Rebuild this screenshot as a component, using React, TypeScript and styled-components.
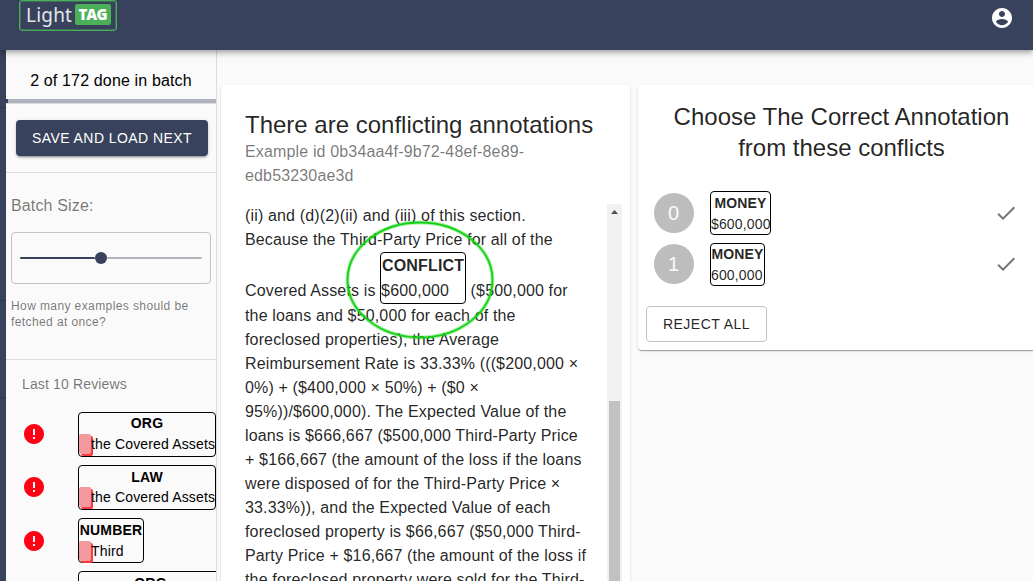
import React from 'react';
import styled, { createGlobalStyle } from 'styled-components';

const navy = '#39425c';
const ink = 'rgba(0, 0, 0, 0.87)';
const muted = 'rgba(0, 0, 0, 0.54)';
const line = '#dcdcdc';
const cardShadow =
  '0 2px 1px -1px rgba(0,0,0,.2), 0 1px 1px rgba(0,0,0,.14), 0 1px 3px rgba(0,0,0,.12)';

const GlobalStyle = createGlobalStyle`
  *, *::before, *::after { box-sizing: border-box; }
  body {
    margin: 0;
    background: #fafafa;
    color: ${ink};
    font-family: 'Liberation Sans', Arial, sans-serif;
    overflow: hidden;
  }
`;

const Page = styled.div`
  height: 581px;
  display: flex;
  flex-direction: column;
  overflow: hidden;
`;

const TopBar = styled.header`
  position: relative;
  z-index: 2;
  flex: none;
  height: 50px;
  padding: 0 19px;
  display: flex;
  justify-content: space-between;
  align-items: flex-start;
  background: ${navy};
  box-shadow: 0 2px 4px -1px rgba(0,0,0,.2), 0 4px 5px rgba(0,0,0,.14), 0 1px 10px rgba(0,0,0,.12);
`;

const Logo = styled.div`
  width: 98px;
  height: 31px;
  padding: 3px 5px 5px 6px;
  display: flex;
  justify-content: space-between;
  border: 1px solid #4bb058;
  border-radius: 3px;
  box-shadow: inset 0 0 0 1px rgba(75, 176, 88, 0.4);
  font-family: 'Noto Sans', sans-serif;
  color: #e4e6ea;
`;

const LogoWord = styled.span`
  font-size: 19px;
  line-height: 22px;
  letter-spacing: 0.2px;
`;

const LogoBadge = styled.span`
  width: 36px;
  height: 21px;
  border-radius: 2px;
  background: #4bb058;
  color: #fff;
  font-size: 15px;
  font-weight: 900;
  line-height: 21px;
  letter-spacing: -0.2px;
  text-align: center;
`;

const AccountIcon = styled.svg`
  width: 24px;
  height: 24px;
  margin-top: 6px;
  fill: #fff;
`;

const Body = styled.div`
  flex: 1;
  min-height: 0;
  display: flex;
`;

const Rail = styled.div`
  flex: none;
  width: 6px;
  padding-top: 57px;
  display: flex;
  flex-direction: column;
  background: ${navy};
`;

const RailRule = styled.div<{ $gap: number }>`
  flex: none;
  height: 1px;
  margin-bottom: ${(p) => p.$gap}px;
  background: #2f374e;
`;

const Sidebar = styled.aside`
  flex: none;
  width: 211px;
  border-right: 1px solid ${line};
  display: flex;
  flex-direction: column;
  overflow: hidden;
`;

const BatchStatus = styled.div`
  flex: none;
  height: 49px;
  padding-top: 19px;
  font-size: 16px;
  line-height: 24px;
  letter-spacing: 0.15px;
  text-align: center;
  color: #000;
`;

const Progress = styled.div`
  flex: none;
  height: 4px;
  background: #b0b3be;
`;

const ProgressValue = styled.div`
  width: 2px;
  height: 4px;
  background: ${navy};
`;

const SaveSection = styled.div`
  flex: none;
  height: 70px;
  padding: 16px 8px 0 10px;
  border-top: 1px solid ${line};
  border-bottom: 1px solid ${line};
`;

const SaveButton = styled.button`
  display: block;
  width: 192px;
  height: 36px;
  padding: 0;
  border: 0;
  border-radius: 4px;
  background: ${navy};
  color: #fff;
  font: 14px 'Liberation Sans', Arial, sans-serif;
  letter-spacing: 0.44px;
  box-shadow: 0 3px 1px -2px rgba(0,0,0,.2), 0 2px 2px rgba(0,0,0,.14), 0 1px 5px rgba(0,0,0,.12);
`;

const BatchSection = styled.div`
  flex: none;
  height: 187px;
  padding: 21px 5px 0;
  border-bottom: 1px solid ${line};
  color: ${muted};
`;

const BatchLabel = styled.div`
  height: 38px;
  font-size: 16px;
  line-height: 24px;
  letter-spacing: 0.15px;
`;

const SliderBox = styled.div`
  width: 200px;
  height: 52px;
  padding: 0 8px;
  display: flex;
  align-items: center;
  border: 1px solid #c4c4c4;
  border-radius: 4px;
`;

const Track = styled.div<{ $active?: boolean }>`
  width: ${(p) => (p.$active ? 75 : 95)}px;
  height: 2px;
  border-radius: 1px;
  background: ${(p) => (p.$active ? navy : '#b0b3be')};
`;

const Thumb = styled.div`
  width: 12px;
  height: 12px;
  border-radius: 50%;
  background: ${navy};
`;

const Helper = styled.div`
  margin-top: 14px;
  font-size: 12px;
  line-height: 16px;
  letter-spacing: 0.4px;
  white-space: pre-line;
`;

const ReviewsTitle = styled.div`
  flex: none;
  height: 52px;
  padding: 14px 16px 0;
  font-size: 14px;
  line-height: 20px;
  letter-spacing: 0.15px;
  color: ${muted};
`;

const Review = styled.div`
  flex: none;
  height: 53px;
  padding-left: 16px;
  display: flex;
  align-items: flex-start;
  color: #000;
`;

const AlertIcon = styled.svg<{ $drop: number }>`
  flex: none;
  width: 24px;
  height: 24px;
  margin: ${(p) => 10 + p.$drop}px 32px 0 0;
  fill: #ff0015;
`;

const Tag = styled.span<{ $width: number; $height?: number; $drop?: number }>`
  flex: none;
  width: ${(p) => p.$width}px;
  height: ${(p) => p.$height ?? 45}px;
  padding-top: ${(p) => p.$drop ?? 0}px;
  display: inline-flex;
  flex-direction: column;
  border: 1px solid #000;
  border-radius: 4px;
  white-space: pre;
  font-size: 14px;
  line-height: 21px;
  letter-spacing: 0.15px;
`;

const TagName = styled.b<{ $tight?: boolean }>`
  margin-bottom: ${(p) => (p.$tight ? -1 : 0)}px;
  text-align: center;
`;

const TagText = styled.span`
  display: flex;
`;

const Swatch = styled.i`
  flex: none;
  width: 12px;
  height: 20px;
  border-radius: 2px;
  background: #f3989d;
  box-shadow: 2px 2px 0 #fb3a40;
`;

const Main = styled.main`
  flex: 1;
  min-width: 0;
  padding: 35px 0 0 4px;
  display: flex;
  align-items: flex-start;
  gap: 8px;
  overflow: hidden;
`;

const Card = styled.section<{ $width: number; $height: number }>`
  flex: none;
  width: ${(p) => p.$width}px;
  height: ${(p) => p.$height}px;
  border-radius: 4px;
  background: #fff;
  box-shadow: ${cardShadow};
`;

const ExampleHead = styled.div`
  height: 118px;
  padding: 24px 24px 0;
`;

const Title = styled.h1`
  margin: 0;
  font-size: 24px;
  font-weight: 400;
  line-height: 31px;
  white-space: pre-line;
`;

const ExampleId = styled.div`
  font-size: 16px;
  line-height: 24px;
  letter-spacing: 0.15px;
  color: ${muted};
  white-space: pre-line;
`;

const ExampleBody = styled.div`
  height: 400px;
  padding: 0 8px 0 24px;
  display: flex;
  justify-content: space-between;
`;

const Passage = styled.div`
  padding-top: 1px;
  font-size: 16px;
  letter-spacing: 0.15px;
  line-height: 24px;
  white-space: pre;
`;

const ConflictLine = styled.div`
  height: 52px;
  display: flex;
  align-items: flex-end;
  line-height: 26px;
`;

const ConflictTag = styled(Tag)`
  position: relative;
  margin: 0 4.5px 0 4.5px;
  font-size: 16px;
  line-height: 25px;
  letter-spacing: 0.15px;
`;

const Highlight = styled.svg`
  position: absolute;
  left: -36px;
  top: -34px;
  width: 152px;
  height: 124px;
  fill: none;
  stroke: #14d214;
`;

const ScrollTrack = styled.div`
  width: 15px;
  margin-top: 1px;
  display: flex;
  flex-direction: column;
  align-items: center;
  background: #f1f1f1;
`;

const ScrollArrow = styled.svg`
  flex: none;
  width: 15px;
  height: 15px;
  margin-bottom: 182px;
  fill: #505050;
`;

const ScrollThumb = styled.div`
  width: 11px;
  height: 200px;
  background: #c1c1c1;
`;

const ChoiceTitle = styled(Title)`
  height: 106px;
  padding-top: 16px;
  text-align: center;
`;

const Choice = styled.div`
  height: 52px;
  padding: 0 27px 0 16px;
  display: flex;
  align-items: flex-start;

  & + & {
    height: 47px;
  }
`;

const Avatar = styled.div<{ $top: number }>`
  width: 40px;
  height: 40px;
  margin: ${(p) => p.$top}px 16px 0 0;
  padding-right: 1px;
  border-radius: 50%;
  background: #bdbdbd;
  color: #fafafa;
  font-size: 20px;
  line-height: 40px;
  text-align: center;
`;

const CheckIcon = styled.svg<{ $top: number }>`
  width: 24px;
  height: 24px;
  margin: ${(p) => p.$top + 8}px 0 0 auto;
  fill: #757575;
`;

const RejectButton = styled.button`
  display: block;
  width: 121px;
  height: 36px;
  margin: 16px 0 0 8px;
  padding: 0;
  border: 1px solid #c4c4c4;
  border-radius: 4px;
  background: #fff;
  color: ${ink};
  font: 14px 'Liberation Sans', Arial, sans-serif;
  letter-spacing: 0.5px;
`;

const reviews = [
  { name: 'ORG', text: 'the Covered Assets', width: 138, drop: 0, iconDrop: 0 },
  { name: 'LAW', text: 'the Covered Assets', width: 138, drop: 1, iconDrop: 0, tight: true },
  { name: 'NUMBER', text: 'Third', width: 66, drop: 1, iconDrop: 1 },
  { name: 'ORG', text: 'the Covered Assets', width: 145, drop: 1, iconDrop: 1 },
];

const choices = [
  { text: '$600,000', width: 61, height: 44, top: 2, drop: 1 },
  { text: '600,000', width: 55, height: 43, top: 1, drop: 0 },
];

const passage = [
  'the loans and $50,000 for each of the',
  'foreclosed properties), the Average',
  'Reimbursement Rate is 33.33% ((($200,000 ×',
  '0%) + ($400,000 × 50%) + ($0 ×',
  '95%))/$600,000). The Expected Value of the',
  'loans is $666,667 ($500,000 Third-Party Price',
  '+ $166,667 (the amount of the loss if the loans',
  'were disposed of for the Third-Party Price ×',
  '33.33%)), and the Expected Value of each',
  'foreclosed property is $66,667 ($50,000 Third-',
  'Party Price + $16,667 (the amount of the loss if',
  'the foreclosed property were sold for the Third-',
];

export default function App() {
  return (
    <Page>
      <GlobalStyle />
      <TopBar>
        <Logo>
          <LogoWord>Light</LogoWord>
          <LogoBadge>TAG</LogoBadge>
        </Logo>
        <AccountIcon viewBox="0 0 24 24">
          <path d="M12 2C6.48 2 2 6.48 2 12s4.48 10 10 10 10-4.48 10-10S17.52 2 12 2zm0 3c1.66 0 3 1.34 3 3s-1.34 3-3 3-3-1.34-3-3 1.34-3 3-3zm0 14.2c-2.5 0-4.71-1.28-6-3.22.03-1.99 4-3.08 6-3.08 1.99 0 5.97 1.09 6 3.08-1.29 1.94-3.5 3.22-6 3.22z" />
        </AccountIcon>
      </TopBar>
      <Body>
        <Rail>
          <RailRule $gap={192} />
          <RailRule $gap={96} />
          <RailRule $gap={0} />
        </Rail>
        <Sidebar>
          <BatchStatus>2 of 172 done in batch</BatchStatus>
          <Progress>
            <ProgressValue />
          </Progress>
          <SaveSection>
            <SaveButton>SAVE AND LOAD NEXT</SaveButton>
          </SaveSection>
          <BatchSection>
            <BatchLabel>Batch Size:</BatchLabel>
            <SliderBox>
              <Track $active />
              <Thumb />
              <Track />
            </SliderBox>
            <Helper>{'How many examples should be\nfetched at once?'}</Helper>
          </BatchSection>
          <ReviewsTitle>Last 10 Reviews</ReviewsTitle>
          {reviews.map((r, i) => (
            <Review key={i}>
              <AlertIcon viewBox="0 0 24 24" $drop={r.iconDrop}>
                <path d="M12 2C6.48 2 2 6.48 2 12s4.48 10 10 10 10-4.48 10-10S17.52 2 12 2zm1 15h-2v-2h2v2zm0-4h-2V7h2v6z" />
              </AlertIcon>
              <Tag $width={r.width} $drop={r.drop}>
                <TagName $tight={r.tight}>{r.name}</TagName>
                <TagText>
                  <Swatch />
                  {r.text}
                </TagText>
              </Tag>
            </Review>
          ))}
        </Sidebar>
        <Main>
          <Card $width={409} $height={520}>
            <ExampleHead>
              <Title>There are conflicting annotations</Title>
              <ExampleId>{'Example id 0b34aa4f-9b72-48ef-8e89-\nedb53230ae3d'}</ExampleId>
            </ExampleHead>
            <ExampleBody>
              <Passage>
                <div>(ii) and (d)(2)(ii) and (iii) of this section.</div>
                <div>Because the Third-Party Price for all of the</div>
                <ConflictLine>
                  <span>Covered Assets is</span>
                  <ConflictTag $width={86} $height={52}>
                    <TagName>CONFLICT</TagName>
                    <TagText>$600,000</TagText>
                    <Highlight viewBox="0 0 152 124">
                      <ellipse cx="75" cy="61" rx="72.5" ry="57.5" strokeWidth="4" strokeOpacity="0.35" />
                      <ellipse cx="75" cy="61" rx="72.5" ry="57.5" strokeWidth="1.8" />
                    </Highlight>
                  </ConflictTag>
                  <span>($500,000 for</span>
                </ConflictLine>
                {passage.map((text) => (
                  <div key={text}>{text}</div>
                ))}
              </Passage>
              <ScrollTrack>
                <ScrollArrow viewBox="0 0 15 15">
                  <path d="M7.5 6 11 10H4z" />
                </ScrollArrow>
                <ScrollThumb />
              </ScrollTrack>
            </ExampleBody>
          </Card>
          <Card $width={407} $height={265}>
            <ChoiceTitle as="h2">{'Choose The Correct Annotation\nfrom these conflicts'}</ChoiceTitle>
            {choices.map((c, i) => (
              <Choice key={c.text}>
                <Avatar $top={c.top}>{i}</Avatar>
                <Tag $width={c.width} $height={c.height} $drop={c.drop}>
                  <TagName>MONEY</TagName>
                  <TagText>{c.text}</TagText>
                </Tag>
                <CheckIcon viewBox="0 0 24 24" $top={c.top}>
                  <path d="M9 16.17 4.83 12l-1.42 1.41L9 19 21 7l-1.41-1.41z" />
                </CheckIcon>
              </Choice>
            ))}
            <RejectButton>REJECT ALL</RejectButton>
          </Card>
        </Main>
      </Body>
    </Page>
  );
}
